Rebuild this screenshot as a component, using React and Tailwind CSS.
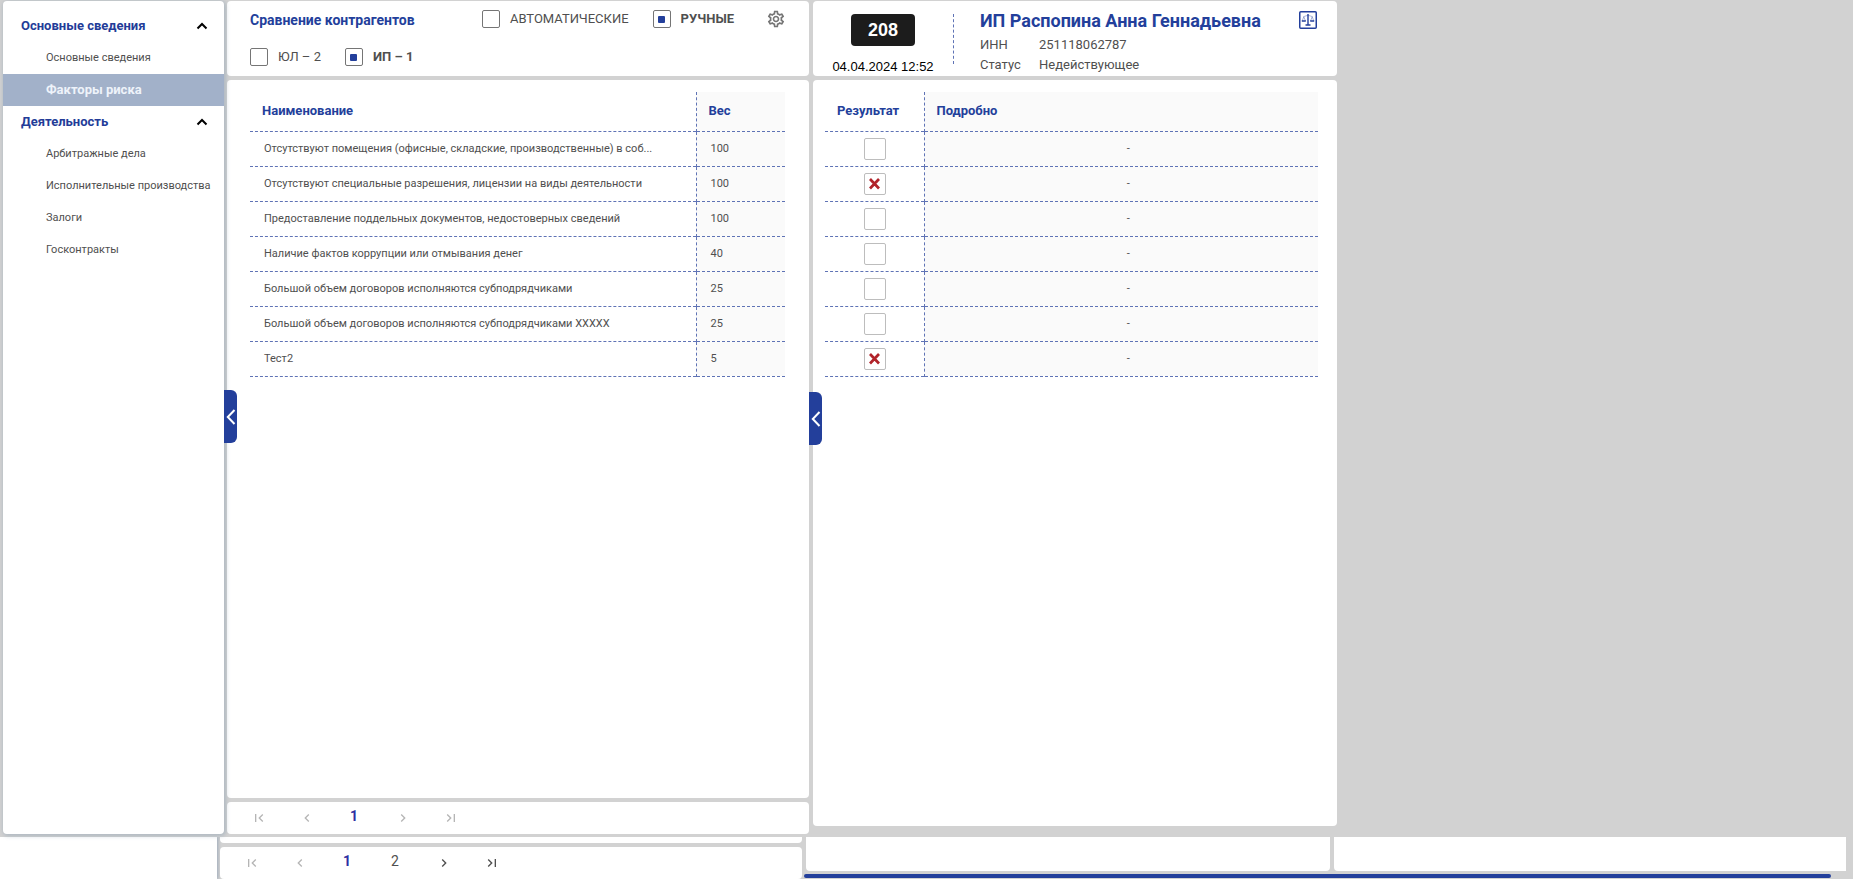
import { useState } from "react";
import {
  MdChevronLeft,
  MdChevronRight,
  MdFirstPage,
  MdLastPage,
  MdOutlineSettings,
} from "react-icons/md";

const MENU = [
  {
    title: "Основные сведения",
    items: ["Основные сведения", "Факторы риска"],
  },
  {
    title: "Деятельность",
    items: [
      "Арбитражные дела",
      "Исполнительные производства",
      "Залоги",
      "Госконтракты",
    ],
  },
];

const FACTORS = [
  { name: "Отсутствуют помещения (офисные, складские, производственные) в соб...", weight: 100, hit: false },
  { name: "Отсутствуют специальные разрешения, лицензии на виды деятельности", weight: 100, hit: true },
  { name: "Предоставление поддельных документов, недостоверных сведений", weight: 100, hit: false },
  { name: "Наличие фактов коррупции или отмывания денег", weight: 40, hit: false },
  { name: "Большой объем договоров исполняются субподрядчиками", weight: 25, hit: false },
  { name: "Большой объем договоров исполняются субподрядчиками XXXXX", weight: 25, hit: false },
  { name: "Тест2", weight: 5, hit: true },
];

function Sidebar() {
  const [active, setActive] = useState("0-1");
  return (
    <nav className="relative z-10 w-[221px] shrink-0 rounded bg-white pt-[9px] shadow-[1px_1px_4px_1px_rgba(120,144,168,0.4)]">
      {MENU.map((group, g) => (
        <section key={group.title}>
          <button
            type="button"
            className="flex h-8 w-full items-center justify-between pr-4 pl-[18px] text-[13px] font-bold text-[#233c98]"
          >
            {group.title}
            <svg viewBox="0 0 12 8" className="h-2 w-3 fill-none stroke-black stroke-2">
              <path d="M1.5 6.5 6 2l4.500 4.500" />
            </svg>
          </button>
          <ul>
            {group.items.map((item, i) => {
              const id = `${g}-${i}`;
              return (
                <li key={id}>
                  <a
                    href="#"
                    onClick={() => setActive(id)}
                    className={
                      active === id
                        ? "flex h-8 items-center bg-[#a2b1c9] pl-[43px] text-[13px] font-bold whitespace-nowrap text-[#eef3fa]"
                        : "flex h-8 items-center pl-[43px] text-[11px] whitespace-nowrap text-[#4f4f4f]"
                    }
                  >
                    {item}
                  </a>
                </li>
              );
            })}
          </ul>
        </section>
      ))}
      <CollapseHandle label="Свернуть меню" position="top-[389px]" />
    </nav>
  );
}

function CollapseHandle({ label, position }) {
  return (
    <button
      type="button"
      aria-label={label}
      className={`absolute left-full z-20 flex h-[53px] w-[13px] items-center justify-center rounded-r-md bg-[#233f9b] ${position}`}
    >
      <svg viewBox="0 0 10 16" className="h-4 w-[10px] fill-none stroke-white stroke-2">
        <path d="M8.500 1 1.800 8l6.700 7" />
      </svg>
    </button>
  );
}

function Filter({ label, defaultChecked = false }) {
  return (
    <label className="flex items-center gap-[10px] text-[13px] text-[#4f4f4f] has-checked:font-bold">
      <input
        type="checkbox"
        defaultChecked={defaultChecked}
        className="grid size-[18px] shrink-0 appearance-none place-content-center rounded-[2px] border border-[#757575] before:size-[7px] before:rounded-[1px] checked:before:bg-[#233f9b] checked:before:content-['']"
      />
      {label}
    </label>
  );
}

function CompareHeader() {
  return (
    <header className="flex h-[75px] flex-col gap-5 rounded bg-white pt-[9px] pr-[23px] pl-[23px]">
      <div className="flex h-[18px] items-center">
        <h1 className="grow pt-[2px] text-[14px] font-bold whitespace-nowrap text-[#233f9b]">
          Сравнение контрагентов
        </h1>
        <div className="flex items-center gap-6">
          <Filter label="АВТОМАТИЧЕСКИЕ" />
          <Filter label="РУЧНЫЕ" defaultChecked />
        </div>
        <button type="button" aria-label="Настройки" className="ml-8 text-[#757575]">
          <MdOutlineSettings className="size-5" />
        </button>
      </div>
      <div className="flex h-[18px] items-center gap-6">
        <Filter label="ЮЛ – 2" />
        <Filter label="ИП – 1" defaultChecked />
      </div>
    </header>
  );
}

function FactorsTable() {
  return (
    <table className="w-full table-fixed border-collapse text-[11px] text-[#4f4f4f]">
      <thead>
        <tr className="h-[39px] border-b border-dashed border-[#5f73b5] text-left text-[13px] text-[#233f9b]">
          <th className="border-r border-dashed border-[#5f73b5] px-3 pb-[2px] font-bold">Наименование</th>
          <th className="w-[89px] bg-[#fafafa] px-3 pb-[2px] font-bold">Вес</th>
        </tr>
      </thead>
      <tbody>
        {FACTORS.map((f) => (
          <tr key={f.name} className="h-[35px] border-b border-dashed border-[#5f73b5]">
            <td className="truncate border-r border-dashed border-[#5f73b5] pt-[2px] pr-6 pl-[14px]">{f.name}</td>
            <td className="bg-[#fafafa] px-[14px] pt-[2px]">{f.weight}</td>
          </tr>
        ))}
      </tbody>
    </table>
  );
}

function ResultsTable() {
  return (
    <table className="w-full table-fixed border-collapse text-[11px] text-[#4f4f4f]">
      <thead>
        <tr className="h-[39px] border-b border-dashed border-[#5f73b5] text-left text-[13px] text-[#233f9b]">
          <th className="w-[99px] border-r border-dashed border-[#5f73b5] px-3 pb-[2px] font-bold">Результат</th>
          <th className="bg-[#fafafa] px-3 pb-[2px] font-bold">Подробно</th>
        </tr>
      </thead>
      <tbody>
        {FACTORS.map((f) => (
          <tr key={f.name} className="h-[35px] border-b border-dashed border-[#5f73b5]">
            <td className="border-r border-dashed border-[#5f73b5] pl-[2px]">
              <label className="relative mx-auto block size-[22px]">
                <input
                  type="checkbox"
                  aria-label={f.name}
                  defaultChecked={f.hit}
                  className="peer block size-[22px] appearance-none rounded-[2px] border border-[#bdbdbd] bg-white"
                />
                <svg
                  viewBox="0 0 22 22"
                  className="pointer-events-none absolute inset-0 hidden size-[22px] fill-none stroke-[#b1232a] peer-checked:block"
                  strokeWidth="2.700"
                >
                  <path d="m6 6 9 9.500M15 6l-9 9.500" />
                </svg>
              </label>
            </td>
            <td className="bg-[#fafafa] pt-[2px] pl-[14px] text-center">-</td>
          </tr>
        ))}
      </tbody>
    </table>
  );
}

const PAGE_ICON = "size-4";
const STEP = "flex w-12 items-center justify-center text-[#4f4f4f] disabled:text-[#b5b5b5]";

function Pagination({ pages }) {
  const single = pages.length === 1;
  return (
    <nav className="flex h-8 shrink-0 rounded bg-white pl-2">
      <button type="button" disabled aria-label="Первая страница" className={STEP}>
        <MdFirstPage className={PAGE_ICON} />
      </button>
      <button type="button" disabled aria-label="Предыдущая страница" className={STEP}>
        <MdChevronLeft className={PAGE_ICON} />
      </button>
      {pages.map((p) => (
        <button
          key={p}
          type="button"
          className={
            p === 1
              ? "w-12 pr-[2px] pb-1 text-[14px] font-bold text-[#2f2fa2]"
              : "w-12 pr-[2px] pb-1 text-[14px] text-[#4f4f4f]"
          }
        >
          {p}
        </button>
      ))}
      <button type="button" disabled={single} aria-label="Следующая страница" className={STEP}>
        <MdChevronRight className={PAGE_ICON} />
      </button>
      <button type="button" disabled={single} aria-label="Последняя страница" className={STEP}>
        <MdLastPage className={PAGE_ICON} />
      </button>
    </nav>
  );
}

function ScalesIcon() {
  return (
    <svg viewBox="0 0 18 18" className="size-[18px] fill-none stroke-[#233f9b]">
      <rect x="0.750" y="0.750" width="16.500" height="16.500" rx="1" strokeWidth="1.500" />
      <path d="M9 3v10.500M6.500 14h5" strokeWidth="1.400" />
      <path d="M4.500 5.500C6 5.500 7 4.500 9 4.500s3 1 4.500 1M4.800 5.800 3.200 10M4.800 5.800 6.500 10M13.200 5.800 11.500 10M13.200 5.800l1.600 4.200" strokeWidth="0.400" />
      <path d="M2.800 10h4M11.200 10h4" strokeWidth="1.300" />
    </svg>
  );
}

function CompanyHeader() {
  return (
    <header className="flex h-[75px] rounded bg-white pr-5">
      <div className="flex w-[140px] shrink-0 flex-col items-center justify-between pt-[13px] pb-px font-['Liberation_Sans',sans-serif] text-black">
        <span className="flex h-8 w-16 items-center justify-center rounded bg-[#1c1c1c] text-[18px] font-bold text-white">
          208
        </span>
        <time className="text-[13px] leading-4">04.04.2024 12:52</time>
      </div>
      <div className="mt-[13px] h-[50px] border-l border-dashed border-[#5f73b5]" />
      <div className="grow pt-2 pl-[26px] text-[#4f4f4f]">
        <h2 className="text-[18px] leading-6 font-bold whitespace-nowrap text-[#233f9b]">
          ИП Распопина Анна Геннадьевна
        </h2>
        <dl className="grid grid-cols-[59px_1fr] pt-[2px] text-[13px] leading-5">
          <dt>ИНН</dt>
          <dd>251118062787</dd>
          <dt>Статус</dt>
          <dd>Недействующее</dd>
        </dl>
      </div>
      <button type="button" aria-label="Сравнить" className="mt-[10px] self-start">
        <ScalesIcon />
      </button>
    </header>
  );
}

function BottomStrip() {
  return (
    <footer className="flex h-[42px] shrink-0 overflow-hidden bg-[#d2d2d2]">
      <div className="w-[217px] shrink-0 bg-white shadow-[1px_0_3px_rgba(120,144,168,0.6)]" />
      <div className="ml-[3px] grid grow grid-cols-[582fr_524fr_512fr] gap-x-1 pr-[7px]">
        <div className="row-span-2 flex flex-col gap-1">
          <div className="h-[6px] rounded-b bg-white" />
          <Pagination pages={[1, 2]} />
        </div>
        <div className="h-[34px] rounded-b bg-white" />
        <div className="h-[34px] rounded-bl bg-white" />
        <div className="col-span-2 mr-[15px] -ml-[2px] h-1 self-center rounded-sm bg-[#233f9b]" />
      </div>
    </footer>
  );
}

export default function App() {
  return (
    <div className="flex min-h-screen flex-col overflow-hidden bg-white pb-[9px] font-[Roboto,sans-serif]">
      <main className="flex grow gap-[3px] bg-[#d2d2d2] pt-px pb-[3px] pl-[3px]">
        <Sidebar />
        <div className="grid grow grid-cols-[582fr_524fr_512fr] gap-x-1">
          <section className="relative flex min-w-0 flex-col gap-1">
            <CompareHeader />
            <div className="grow rounded bg-white pt-3 pr-6 pl-[23px]">
              <FactorsTable />
            </div>
            <Pagination pages={[1]} />
            <CollapseHandle label="Свернуть сравнение" position="top-[391px]" />
          </section>
          <section className="flex min-w-0 flex-col gap-1 pb-2">
            <CompanyHeader />
            <div className="grow rounded bg-white pt-3 pr-[19px] pl-3">
              <ResultsTable />
            </div>
          </section>
        </div>
      </main>
      <BottomStrip />
    </div>
  );
}
